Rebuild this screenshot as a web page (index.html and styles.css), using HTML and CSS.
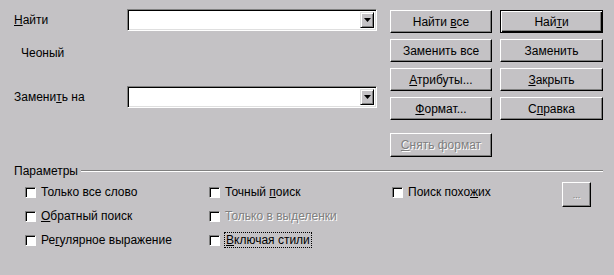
FILE: index.html
```html
<!DOCTYPE html>
<html lang="ru">
<head>
  <meta charset="UTF-8">
  <title>Найти и заменить</title>
  <meta name="viewport" content="width=device-width, initial-scale=1.0">
  <link rel="stylesheet" href="styles.css">
</head>
<body>
  <div class="dialog">
    <div class="top">
      <div class="fields">
        <div class="field-row">
          <label class="field-label"><u>Н</u>айти</label>
          <div class="combo">
            <span class="drop"><svg width="7" height="4" viewBox="0 0 7 4"><polygon points="0,0 7,0 3.5,4" fill="#000"/></svg></span>
          </div>
        </div>
        <div class="status">Чеоный</div>
        <div class="field-row">
          <label class="field-label">Замени<u>т</u>ь на</label>
          <div class="combo">
            <span class="drop"><svg width="7" height="4" viewBox="0 0 7 4"><polygon points="0,0 7,0 3.5,4" fill="#000"/></svg></span>
          </div>
        </div>
      </div>

      <div class="buttons">
        <button class="btn">Найти <u>в</u>се</button>
        <button class="btn default">Най<u>т</u>и</button>
        <button class="btn">Заменить все</button>
        <button class="btn">Заменить</button>
        <button class="btn"><u>А</u>трибуты...</button>
        <button class="btn"><u>З</u>акрыть</button>
        <button class="btn"><u>Ф</u>ормат...</button>
        <button class="btn">С<u>п</u>равка</button>
        <button class="btn disabled last"><u>С</u>нять формат</button>
      </div>
    </div>

    <div class="group-title">
      <span>Параметры</span>
      <span class="rule"></span>
    </div>

    <div class="options">
      <label class="check"><span class="box"></span><span>Только все слово</span></label>
      <label class="check"><span class="box"></span><span>Точный <u>п</u>оиск</span></label>
      <label class="check"><span class="box"></span><span>Поиск похо<u>ж</u>их</span></label>
      <button class="btn more disabled">...</button>

      <label class="check"><span class="box"></span><span><u>О</u>братный поиск</span></label>
      <label class="check disabled"><span class="box"></span><span>Только в вы<u>д</u>еленки</span></label>
      <span></span>
      <span></span>

      <label class="check"><span class="box"></span><span>Ре<u>г</u>улярное выражение</span></label>
      <label class="check"><span class="box"></span><span class="focus"><u>В</u>ключая стили</span></label>
    </div>
  </div>
</body>
</html>
```

FILE: styles.css
```css
body {
  margin: 0;
  background: #c4c2c5;
  color: #000;
  font-family: "Liberation Sans", Arial, sans-serif;
  font-size: 12px;
}
u {
  text-decoration: underline;
  text-underline-offset: 1px;
}
.dialog {
  width: 614px;
  height: 275px;
}
.top {
  display: flex;
  padding: 9px 11px 0 14px;
}
.fields {
  width: 363px;
  margin-right: 13px;
}
.field-row {
  display: flex;
  align-items: center;
  height: 22px;
}
.field-label {
  width: 113px;
}
.combo {
  box-sizing: border-box;
  width: 250px;
  height: 22px;
  background: #fff;
  border: 1px solid;
  border-color: #808080 #fff #fff #808080;
  box-shadow: inset 1px 1px #000, inset -1px -1px #dfdfdf;
  padding: 2px;
  display: flex;
  justify-content: flex-end;
}
.drop {
  box-sizing: border-box;
  width: 14px;
  height: 16px;
  background: #c4c2c5;
  border: 1px solid;
  border-color: #dfdfdf #000 #000 #dfdfdf;
  box-shadow: inset 1px 1px #fff, inset -1px -1px #808080;
  display: flex;
  align-items: center;
  justify-content: center;
}
.status {
  padding-left: 7px;
  line-height: 14px;
  margin: 15px 0 26px;
}
.buttons {
  display: grid;
  grid-template-columns: 102px 103px;
  grid-auto-rows: 23px;
  column-gap: 8px;
  row-gap: 6px;
  padding-top: 1px;
}
.btn {
  box-sizing: border-box;
  font: inherit;
  color: #000;
  background: #c4c2c5;
  border: 1px solid;
  border-color: #fff #000 #000 #fff;
  box-shadow: inset -1px -1px #808080;
  padding: 0;
}
.btn.default {
  border: 1px solid #000;
  box-shadow: inset 1px 1px #fff, inset -1px -1px #000, inset -2px -2px #808080;
}
.btn.disabled {
  color: #808080;
  text-shadow: 1px 1px 0 #fff;
}
.btn.last {
  margin-top: 7px;
  height: 24px;
}
.group-title {
  display: flex;
  align-items: center;
  padding: 15px 11px 0 14px;
  line-height: 14px;
}
.rule {
  flex: 1;
  margin-left: 3px;
  border-top: 1px solid #808080;
  border-bottom: 1px solid #fff;
}
.options {
  display: grid;
  grid-template-columns: 184px 183px 170px 29px;
  grid-auto-rows: 24px;
  padding: 2px 0 0 25px;
}
.check {
  display: flex;
  align-items: center;
}
.check.disabled {
  color: #808080;
  text-shadow: 1px 1px 0 #fff;
}
.box {
  box-sizing: border-box;
  width: 11px;
  height: 11px;
  margin-right: 5px;
  background: #fff;
  border: 1px solid;
  border-color: #808080 #fff #fff #808080;
  box-shadow: inset 1px 1px #000;
}
.focus {
  outline: 1px dotted #000;
  outline-offset: 0;
  padding: 0 1px;
}
.btn.more {
  height: 25px;
  margin-top: 2px;
  font-size: 9px;
}
```
